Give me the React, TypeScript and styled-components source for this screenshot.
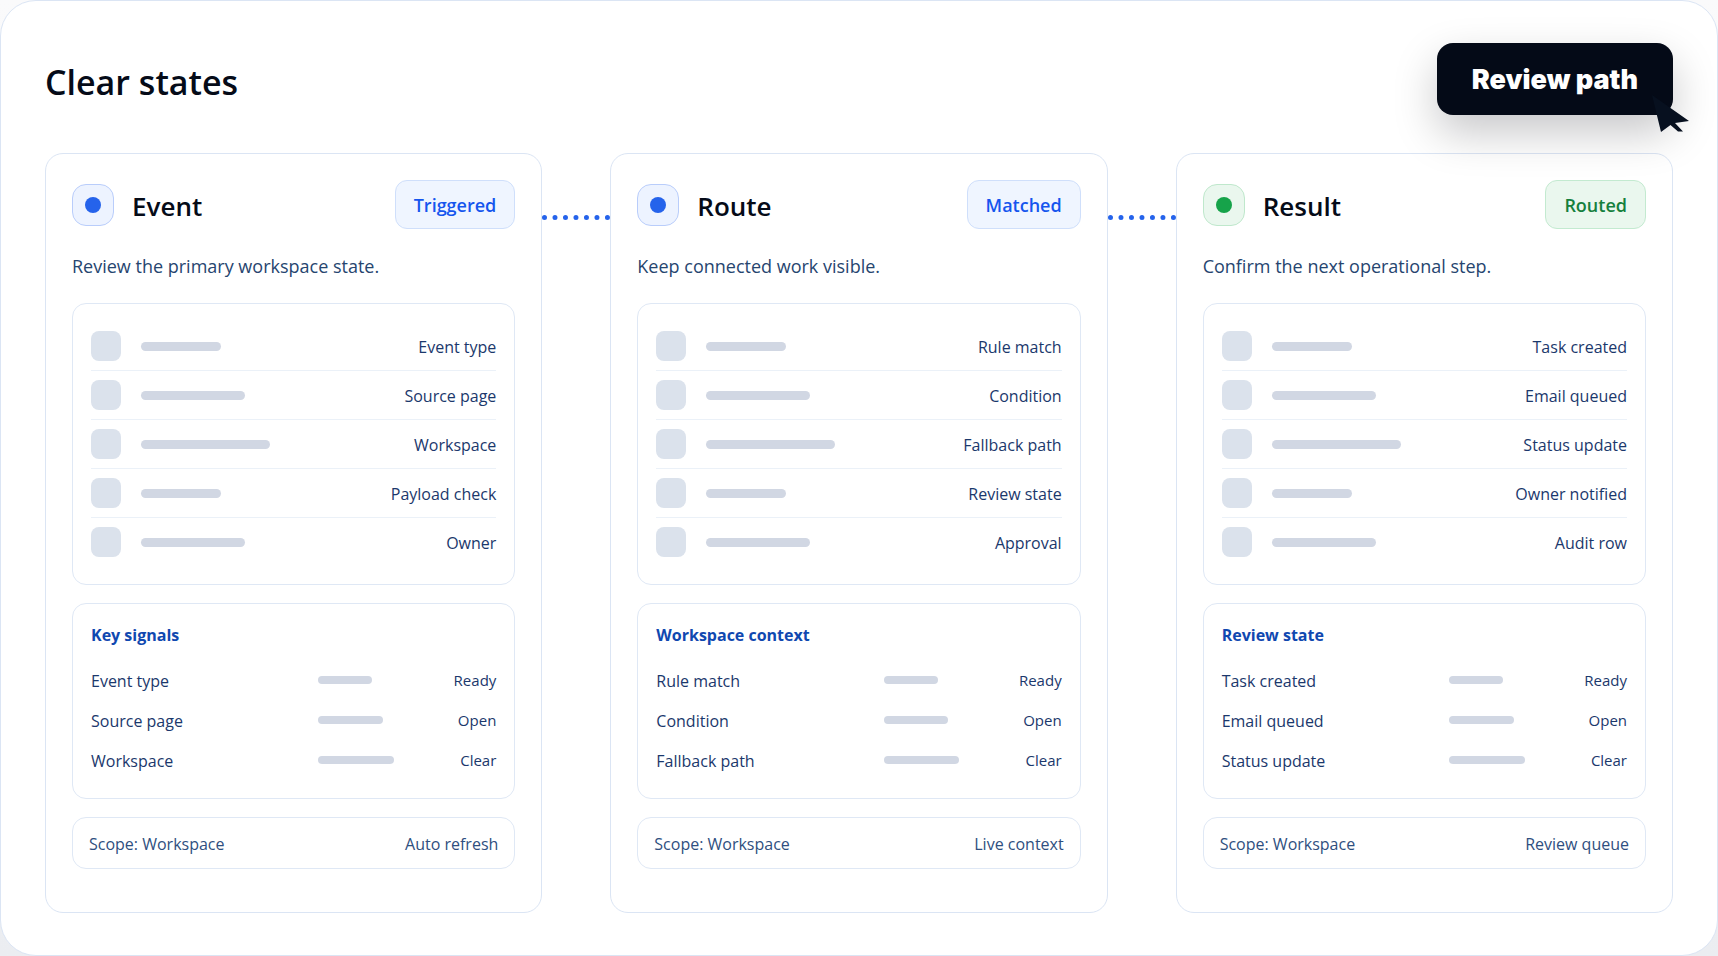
import React from "react";
import styled, { createGlobalStyle } from "styled-components";

const GlobalStyle = createGlobalStyle`
  *, *::before, *::after { box-sizing: border-box; }
  body {
    margin: 0;
    background: linear-gradient(#fafafb, #ebedf1);
    color: #050b18;
    font-family: "Segoe UI", "Open Sans", "Noto Sans", sans-serif;
  }
  h1, h2, h3, p, ul { margin: 0; padding: 0; }
  ul { list-style: none; }
`;

type Tone = "blue" | "green";

const tones = {
  blue: { dot: "#2563eb", iconBg: "#edf3ff", iconLine: "#b9cdfb", text: "#1555ee", pillBg: "#eff5ff", pillLine: "#cfdffb" },
  green: { dot: "#16a34a", iconBg: "#eaf7ee", iconLine: "#bfe8cc", text: "#15803d", pillBg: "#eaf7ee", pillLine: "#c3ead0" },
};

const Panel = styled.main`
  display: flex;
  flex-direction: column;
  gap: 38px;
  min-height: 100vh;
  padding: 42px 44px;
  border: 1px solid #dbe5f4;
  border-radius: 36px;
  background: #fff;
`;

const Header = styled.header`
  display: flex;
  align-items: center;
  justify-content: space-between;
`;

const Title = styled.h1`
  padding-top: 6px;
  font-size: 34px;
  line-height: 48px;
  font-weight: 600;
`;

const ActionWrap = styled.div`
  position: relative;
`;

const ActionButton = styled.button`
  height: 72px;
  padding: 0 35px;
  border: 0;
  border-radius: 16px;
  background: #040a17;
  color: #fff;
  font-family: "Arial Black", Inter, sans-serif;
  font-size: 27px;
  font-weight: 900;
  box-shadow: 0 18px 44px rgba(4, 4, 12, 0.22);
  cursor: pointer;
`;

const Cursor = styled.svg`
  position: absolute;
  right: -16px;
  bottom: -17px;
  pointer-events: none;
`;

const Flow = styled.div`
  flex: 1;
  display: grid;
  grid-template-columns: minmax(0, 1fr) 68px minmax(0, 1fr) 68px minmax(0, 1fr);
`;

const Connector = styled.div`
  height: 5px;
  margin-top: 62px;
  border-top: 5px dotted #2563eb;
`;

const Card = styled.section`
  padding: 26px;
  border: 1px solid #dbe5f4;
  border-radius: 18px;
`;

const CardHeader = styled.div`
  display: flex;
  align-items: center;
  gap: 18px;
  height: 49px;
`;

const StateIcon = styled.span<{ $tone: Tone }>`
  display: grid;
  place-items: center;
  width: 42px;
  height: 42px;
  border: 1px solid ${(p) => tones[p.$tone].iconLine};
  border-radius: 14px;
  background: ${(p) => tones[p.$tone].iconBg};

  &::before {
    content: "";
    width: 16px;
    height: 16px;
    border-radius: 50%;
    background: ${(p) => tones[p.$tone].dot};
  }
`;

const CardTitle = styled.h2`
  flex: 1;
  padding-top: 2px;
  font-size: 26px;
  line-height: 36px;
  font-weight: 600;
`;

const Pill = styled.span<{ $tone: Tone }>`
  padding: 2px 18px 0;
  border: 1px solid ${(p) => tones[p.$tone].pillLine};
  border-radius: 12px;
  background: ${(p) => tones[p.$tone].pillBg};
  color: ${(p) => tones[p.$tone].text};
  font-size: 18px;
  line-height: 45px;
  font-weight: 600;
`;

const Description = styled.p`
  margin: 22px 0;
  color: #26456f;
  font-size: 18px;
  line-height: 30px;
`;

const Box = styled.div`
  margin-bottom: 18px;
  padding: 18px;
  border: 1px solid #dfe8f5;
  border-radius: 14px;
`;

const ListRow = styled.li`
  display: flex;
  align-items: center;
  gap: 20px;
  height: 49px;
  border-bottom: 1px solid #ebf1f8;
  color: #1b386c;
  font-size: 16px;

  &:last-child {
    height: 48px;
    border-bottom: 0;
  }
`;

const Thumb = styled.span`
  width: 30px;
  height: 30px;
  border-radius: 8px;
  background: #dbe2ec;
`;

const Bar = styled.span<{ $width: string; $height: number }>`
  width: ${(p) => p.$width};
  height: ${(p) => p.$height}px;
  border-radius: 5px;
  background: #d1d7e3;
`;

const RowLabel = styled.span`
  margin-left: auto;
  padding-top: 2px;
`;

const BoxTitle = styled.h3`
  margin-bottom: 12px;
  color: #1048b0;
  font-size: 16px;
  line-height: 26px;
  font-weight: 700;
`;

const SignalRow = styled.li`
  display: grid;
  grid-template-columns: 1fr 108px 70px;
  align-items: center;
  height: 40px;
  color: #1b386c;
  font-size: 16px;
`;

const SignalName = styled.span`
  padding-top: 2px;
`;

const SignalState = styled.span`
  font-size: 15px;
  text-align: right;
`;

const Scope = styled.div`
  display: flex;
  align-items: center;
  justify-content: space-between;
  height: 52px;
  padding: 2px 16px 0;
  border: 1px solid #dfe8f5;
  border-radius: 14px;
  color: #2f4f80;
  font-size: 16px;
`;

interface State {
  title: string;
  status: string;
  tone: Tone;
  description: string;
  rows: string[];
  signalsTitle: string;
  mode: string;
}

const states: State[] = [
  {
    title: "Event",
    status: "Triggered",
    tone: "blue",
    description: "Review the primary workspace state.",
    rows: ["Event type", "Source page", "Workspace", "Payload check", "Owner"],
    signalsTitle: "Key signals",
    mode: "Auto refresh",
  },
  {
    title: "Route",
    status: "Matched",
    tone: "blue",
    description: "Keep connected work visible.",
    rows: ["Rule match", "Condition", "Fallback path", "Review state", "Approval"],
    signalsTitle: "Workspace context",
    mode: "Live context",
  },
  {
    title: "Result",
    status: "Routed",
    tone: "green",
    description: "Confirm the next operational step.",
    rows: ["Task created", "Email queued", "Status update", "Owner notified", "Audit row"],
    signalsTitle: "Review state",
    mode: "Review queue",
  },
];

const rowBars = ["80px", "104px", "129px"];
const signals = [
  { state: "Ready", width: "50%" },
  { state: "Open", width: "60%" },
  { state: "Clear", width: "70%" },
];

function StateCard({ state }: { state: State }) {
  return (
    <Card>
      <CardHeader>
        <StateIcon $tone={state.tone} />
        <CardTitle>{state.title}</CardTitle>
        <Pill $tone={state.tone}>{state.status}</Pill>
      </CardHeader>
      <Description>{state.description}</Description>
      <Box as="ul">
        {state.rows.map((label, i) => (
          <ListRow key={label}>
            <Thumb />
            <Bar $width={rowBars[i % 3]} $height={9} />
            <RowLabel>{label}</RowLabel>
          </ListRow>
        ))}
      </Box>
      <Box>
        <BoxTitle>{state.signalsTitle}</BoxTitle>
        <ul>
          {signals.map((signal, i) => (
            <SignalRow key={signal.state}>
              <SignalName>{state.rows[i]}</SignalName>
              <Bar $width={signal.width} $height={8} />
              <SignalState>{signal.state}</SignalState>
            </SignalRow>
          ))}
        </ul>
      </Box>
      <Scope>
        <span>Scope: Workspace</span>
        <span>{state.mode}</span>
      </Scope>
    </Card>
  );
}

export default function App() {
  return (
    <>
      <GlobalStyle />
      <Panel>
        <Header>
          <Title>Clear states</Title>
          <ActionWrap>
            <ActionButton type="button">Review path</ActionButton>
            <Cursor width="38" height="38" viewBox="0 0 38 38" aria-hidden="true">
              <path d="M1 1 L38 27 L24 29 L32 37.5 L27 37.5 L19.5 31 L10 38 Z" fill="#07101f" />
            </Cursor>
          </ActionWrap>
        </Header>
        <Flow>
          {states.map((state, i) => (
            <React.Fragment key={state.title}>
              {i > 0 && <Connector />}
              <StateCard state={state} />
            </React.Fragment>
          ))}
        </Flow>
      </Panel>
    </>
  );
}
